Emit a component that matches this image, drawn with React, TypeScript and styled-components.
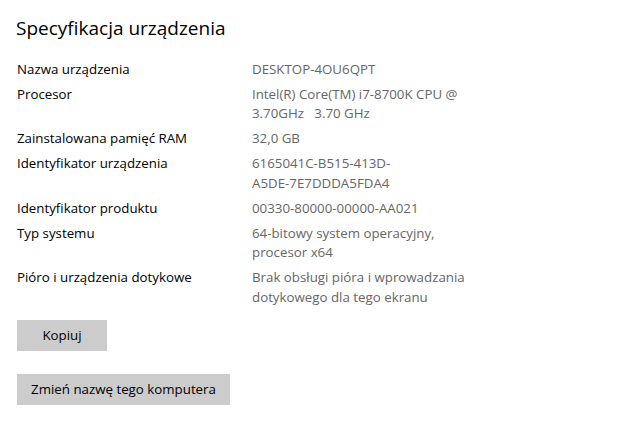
import React from "react";
import styled, { createGlobalStyle } from "styled-components";

const GlobalStyle = createGlobalStyle`
  html, body {
    margin: 0;
    padding: 0;
    background: #ffffff;
  }

  body {
    font-family: "Segoe UI", "Open Sans", "Noto Sans", sans-serif;
    -webkit-font-smoothing: antialiased;
  }
`;

interface Spec {
  label: string;
  lines: string[];
}

const specs: Spec[] = [
  { label: "Nazwa urządzenia", lines: ["DESKTOP-4OU6QPT"] },
  {
    label: "Procesor",
    lines: ["Intel(R) Core(TM) i7-8700K CPU @", "3.70GHz   3.70 GHz"],
  },
  { label: "Zainstalowana pamięć RAM", lines: ["32,0 GB"] },
  {
    label: "Identyfikator urządzenia",
    lines: ["6165041C-B515-413D-", "A5DE-7E7DDDA5FDA4"],
  },
  { label: "Identyfikator produktu", lines: ["00330-80000-00000-AA021"] },
  {
    label: "Typ systemu",
    lines: ["64-bitowy system operacyjny,", "procesor x64"],
  },
  {
    label: "Pióro i urządzenia dotykowe",
    lines: ["Brak obsługi pióra i wprowadzania", "dotykowego dla tego ekranu"],
  },
];

const App: React.FC = () => {
  return (
    <>
      <GlobalStyle />
      <Page>
        <Title>Specyfikacja urządzenia</Title>
        <SpecList>
          {specs.map(spec => (
            <SpecRow key={spec.label}>
              <Label>{spec.label}</Label>
              <Value>
                {spec.lines.map(line => (
                  <Line key={line}>{line}</Line>
                ))}
              </Value>
            </SpecRow>
          ))}
        </SpecList>
        <Actions>
          <Button width={90}>Kopiuj</Button>
          <Button width={213}>Zmień nazwę tego komputera</Button>
        </Actions>
      </Page>
    </>
  );
};

const Page = styled.div`
  display: flex;
  flex-direction: column;
  width: 624px;
  height: 423px;
  box-sizing: border-box;
  padding: 14px 17px 0 17px;
  overflow: hidden;
`;

const Title = styled.h1`
  margin: 0 0 0 -1px;
  font-size: 19px;
  font-weight: 400;
  line-height: 28px;
  color: #000000;
`;

const SpecList = styled.div`
  display: flex;
  flex-direction: column;
  gap: 5.5px;
  margin-top: 17.5px;
`;

const SpecRow = styled.div`
  display: grid;
  grid-template-columns: 235px 1fr;
  font-size: 13.3px;
  line-height: 19.5px;
`;

const Label = styled.div`
  color: #000000;
  white-space: nowrap;
`;

const Value = styled.div`
  display: flex;
  flex-direction: column;
  color: #666666;
`;

const Line = styled.span`
  white-space: pre;
`;

const Actions = styled.div`
  display: flex;
  flex-direction: column;
  align-items: flex-start;
  gap: 23px;
  margin-top: 12.5px;
`;

const Button = styled.button<{ width: number }>`
  width: ${({ width }) => width}px;
  height: 31px;
  padding: 0;
  border: none;
  border-radius: 0;
  background: #cccccc;
  color: #000000;
  font-family: inherit;
  font-size: 13.3px;
  cursor: pointer;
`;

export default App;
